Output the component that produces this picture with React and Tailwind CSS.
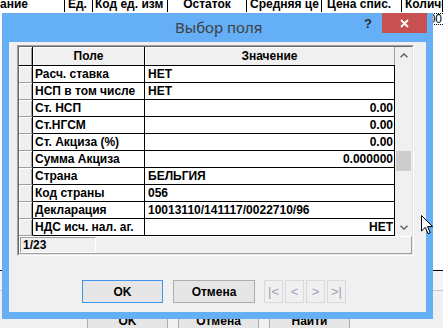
import React from 'react';

// Rows of the "Выбор поля" grid
const rows = [
  { name: 'Расч. ставка', value: 'НЕТ', align: 'left' },
  { name: 'НСП в том числе', value: 'НЕТ', align: 'left' },
  { name: 'Ст. НСП', value: '0.00', align: 'right' },
  { name: 'Ст.НГСМ', value: '0.00', align: 'right' },
  { name: 'Ст. Акциза (%)', value: '0.00', align: 'right' },
  { name: 'Сумма Акциза', value: '0.000000', align: 'right' },
  { name: 'Страна', value: 'БЕЛЬГИЯ', align: 'left' },
  { name: 'Код страны', value: '056', align: 'left' },
  { name: 'Декларация', value: '10013110/141117/0022710/96', align: 'left' },
  { name: 'НДС исч. нал. аг.', value: 'НЕТ', align: 'right' },
];

const bgColumns = [
  { label: 'ание', w: 'w-[65px]', cls: 'pl-0' },
  { label: 'Ед.', w: 'w-[28px]', cls: 'pl-[3px]' },
  { label: 'Код ед. изм', w: 'w-[75px]', cls: 'pl-[2px]' },
  { label: 'Остаток', w: 'w-[79px]', cls: 'justify-center' },
  { label: 'Средняя це', w: 'w-[75px]', cls: 'pl-[3px]' },
  { label: 'Цена спис.', w: 'w-[80px]', cls: 'pl-[5px]' },
  { label: 'Количе', w: 'w-[41px]', cls: 'pl-[3px]' },
];

const Chevron = ({ down }) => (
  <svg width="8" height="5" viewBox="0 0 8 5">
    <path
      d={down ? 'M0.5 0.8 L4 4 L7.5 0.8' : 'M0.5 4.2 L4 1 L7.5 4.2'}
      fill="none"
      stroke="#606060"
      strokeWidth="1.5"
    />
  </svg>
);

const App = () => {
  return (
    <div
      className="relative w-[443px] h-[328px] overflow-hidden bg-white text-black"
      style={{ fontFamily: '"Liberation Sans", Arial, sans-serif' }}
    >
      {/* background window, mostly hidden behind the dialog */}
      <div className="flex flex-col h-full">
        <div className="flex h-[12px] overflow-hidden bg-white text-[12px] font-bold leading-[8px]">
          {bgColumns.map((c) => (
            <div key={c.label} className={`${c.w} shrink-0 flex border-r border-black ${c.cls}`}>
              <span className="whitespace-nowrap">{c.label}</span>
            </div>
          ))}
        </div>
        <div className="flex justify-end h-[12px] mt-[1px]">
          <div className="border-y border-dotted border-black text-[12px] leading-[10px] pr-[1px]">0.00</div>
        </div>
        <div className="flex-1 bg-white border-b border-black"></div>
        <div className="h-[20px] bg-[#f4f4f4] border-b border-[#c8c8c8]"></div>
        <div className="h-[37px] bg-[#f0f0f0] flex gap-[10px] pl-[87px] pt-[18px] shrink-0">
          {['OK', 'Отмена', 'Найти'].map((b) => (
            <div
              key={b}
              className="w-[81px] h-[23px] shrink-0 border border-[#adadad] bg-[#e5e5e5] flex items-center justify-center text-[12px] font-bold"
            >
              {b}
            </div>
          ))}
        </div>
      </div>

      {/* dialog */}
      <div className="absolute left-[2px] top-[13px] w-[431px] h-[306px] bg-[#64aff5] flex flex-col">
        <div className="h-[29px] flex items-start shrink-0 pr-[6px]">
          <div
            className="self-center ml-[173px] text-[15px] text-[#404040] whitespace-nowrap"
            style={{ fontFamily: '"Noto Sans", "Open Sans", sans-serif' }}
          >
            Выбор поля
          </div>
          <div className="ml-auto mt-[4px] mr-[10px] text-[13px] font-bold text-[#2b2b2b] leading-[14px]">?</div>
          <div className="w-[45px] h-[20px] shrink-0 bg-[#c75050] flex items-center justify-center">
            <svg width="9" height="9" viewBox="0 0 9 9">
              <path d="M1 1 L8 8 M8 1 L1 8" stroke="#fff" strokeWidth="1.8" />
            </svg>
          </div>
        </div>

        <div className="flex-1 mx-[7px] mb-[7px] bg-[#f0f0f0] flex flex-col pl-[8px] pt-[3px]">
          {/* grid frame */}
          <div className="w-[397px] h-[211px] border border-t-[#a0a0a0] border-l-[#a0a0a0] border-b-white border-r-white">
            <div className="h-full border border-t-[#696969] border-l-[#696969] border-b-[#e3e3e3] border-r-[#e3e3e3] flex flex-col bg-white">
              <div className="flex">
                <div className="flex flex-col">
                  {/* header */}
                  <div className="flex h-[19px] border-b border-black text-[12px] font-bold">
                    <div className="w-[14px] border-r border-black bg-[#f0f0f0] shadow-[inset_1px_1px_0_#fff,inset_-1px_0_0_#a0a0a0]"></div>
                    <div className="w-[112px] border-r border-black bg-[#f0f0f0] flex items-center justify-center shadow-[inset_1px_1px_0_#fff]">
                      Поле
                    </div>
                    <div className="w-[250px] border-r border-[#a0a0a0] bg-[#f0f0f0] flex items-center justify-center shadow-[inset_1px_1px_0_#fff]">
                      Значение
                    </div>
                  </div>
                  {rows.map((r) => (
                    <div key={r.name} className="flex h-[17px] text-[12px] font-bold leading-[16px]">
                      <div className="w-[14px] border-r border-black border-b border-b-[#a0a0a0] bg-[#f0f0f0] shadow-[inset_1px_1px_0_#fff,inset_-1px_0_0_#a0a0a0]"></div>
                      <div className="w-[112px] border-r border-b border-black pl-[2px] whitespace-nowrap overflow-hidden">
                        {r.name}
                      </div>
                      <div
                        className={`w-[250px] border-r border-b border-black whitespace-nowrap overflow-hidden ${
                          r.align === 'right' ? 'text-right pr-[1px]' : 'pl-[3px]'
                        }`}
                      >
                        {r.value}
                      </div>
                    </div>
                  ))}
                </div>
                {/* scrollbar */}
                <div className="w-[17px] bg-[#f0f0f0] flex flex-col">
                  <div className="h-[17px] flex items-center justify-center">
                    <Chevron />
                  </div>
                  <div className="flex-1">
                    <div className="mt-[87px] mx-[1px] h-[20px] bg-[#cdcdcd]"></div>
                  </div>
                  <div className="h-[17px] flex items-center justify-center">
                    <Chevron down />
                  </div>
                </div>
              </div>
              {/* status bar */}
              <div className="flex-1 bg-[#f0f0f0] border border-t-white border-l-white border-b-[#a0a0a0] border-r-[#a0a0a0] flex items-stretch">
                <div className="w-[76px] border border-t-[#a0a0a0] border-l-[#a0a0a0] border-b-white border-r-white text-[12px] font-bold leading-[14px] pl-[2px]">
                  1/23
                </div>
              </div>
            </div>
          </div>

          {/* buttons */}
          <div className="flex mt-[24px] pl-[65px]">
            <div className="w-[81px] h-[23px] border border-[#3d97e8] bg-[#e6e6e6] flex items-center justify-center text-[12px] font-bold">
              OK
            </div>
            <div className="ml-[10px] w-[82px] h-[23px] border border-[#adadad] bg-[#e6e6e6] flex items-center justify-center text-[12px] font-bold">
              Отмена
            </div>
            <div className="ml-[9px] flex gap-[2px]">
              {['|<', '<', '>', '>|'].map((g) => (
                <div
                  key={g}
                  className="w-[19px] h-[23px] border border-[#d9d9d9] bg-[#f0f0f0] flex items-center justify-center text-[13px] text-[#9aa4b4]"
                >
                  {g}
                </div>
              ))}
            </div>
          </div>
        </div>
      </div>

      {/* mouse cursor */}
      <svg className="absolute left-[421px] top-[215px]" width="13" height="20" viewBox="0 0 13 20">
        <path
          d="M0.5 0.5 L0.5 16 L4.3 12.4 L7 18.6 L9.2 17.7 L6.6 11.6 L11.6 11.6 Z"
          fill="#fff"
          stroke="#000"
          strokeWidth="1"
        />
      </svg>
    </div>
  );
};

export default App;
